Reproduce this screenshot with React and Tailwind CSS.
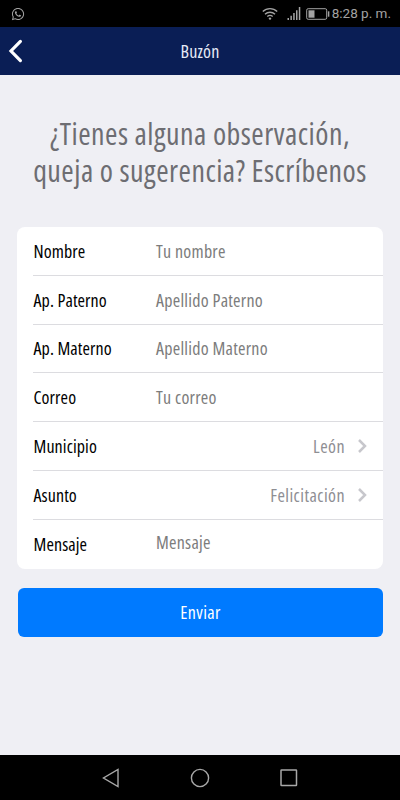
import { FaWhatsapp } from 'react-icons/fa'

const fields = [
  { label: 'Nombre', placeholder: 'Tu nombre' },
  { label: 'Ap. Paterno', placeholder: 'Apellido Paterno' },
  { label: 'Ap. Materno', placeholder: 'Apellido Materno' },
  { label: 'Correo', placeholder: 'Tu correo' },
  { label: 'Municipio', value: 'León' },
  { label: 'Asunto', value: 'Felicitación' },
  { label: 'Mensaje', placeholder: 'Mensaje', multiline: true },
]

function StatusBar() {
  return (
    <div className="flex h-[27px] items-center bg-black pl-[11px] pr-[9px] text-[#a3a3a3]">
      <FaWhatsapp size={14} />
      <svg className="ml-auto" width="16" height="13" viewBox="0 0 16 13" fill="none" stroke="currentColor" strokeWidth="1.4">
        <path d="M.8 4.6a10.3 10.3 0 0 1 14.4 0M3 7.2a7.2 7.2 0 0 1 10 0M5.3 9.6a4 4 0 0 1 5.4 0" />
        <circle cx="8" cy="11.6" r="1.2" fill="currentColor" stroke="none" />
      </svg>
      <svg className="ml-[9px]" width="14" height="13" viewBox="0 0 14 13" fill="currentColor">
        <path d="M.5 11h1.5v2H.5zM3.4 8.8h1.5V13H3.4zM6.2 6h1.5v7H6.2zM9 3.2h1.5V13H9zM11.8 0h1.5v13h-1.5z" />
      </svg>
      <svg className="ml-[5px]" width="24" height="12" viewBox="0 0 24 12" fill="none" stroke="currentColor">
        <rect x=".7" y=".7" width="20" height="10.6" rx="1.5" />
        <path d="M2.5 2.3h6v7.4h-6z" fill="currentColor" stroke="none" />
        <path d="M22.6 3.3v5.4" strokeWidth="1.5" />
      </svg>
      <span className="ml-0.5 whitespace-nowrap pt-px font-['Roboto'] text-[13.5px] leading-none font-stretch-normal">
        8:28 p. m.
      </span>
    </div>
  )
}

function FieldRow({ field, last }) {
  return (
    <li className="ml-4 flex">
      <div
        className={
          last
            ? 'flex h-[49px] flex-1 items-center text-lg'
            : 'flex h-[48.8px] flex-1 items-center border-b border-[#dcdce0] text-lg'
        }
      >
        <span className="w-[123px] pl-[.5px] tracking-[.1px] text-black">{field.label}</span>
        {field.value ? (
          <span className="ml-auto mr-4 flex items-center gap-[13px] tracking-[.45px] text-[#8e8e93]">
            {field.value}
            <svg width="9" height="14" viewBox="0 0 9 14" fill="none" stroke="#c7c7cc" strokeWidth="2.5">
              <path d="m1 1 6 6-6 6" />
            </svg>
          </span>
        ) : (
          <span
            className={
              field.multiline
                ? 'pb-1 tracking-[.25px] text-[#7c7c7c]'
                : 'tracking-[.25px] text-[#7c7c7c]'
            }
          >
            {field.placeholder}
          </span>
        )}
      </div>
    </li>
  )
}

function App() {
  return (
    <div className="flex h-[800px] w-[400px] flex-col bg-[#efeff4] font-['Open_Sans',sans-serif] font-stretch-condensed">
      <StatusBar />

      <header className="flex h-12 items-center bg-[#0a1e55] px-2 text-[#e6ebf7]">
        <svg className="text-white" width="15" height="24" viewBox="0 0 15 24" fill="none" stroke="currentColor" strokeWidth="3.2" strokeLinecap="round">
          <path d="M12.4 2.4 3 12l9.4 9.6" />
        </svg>
        <h1 className="flex-1 pr-[15px] text-center text-lg tracking-[.2px]">Buzón</h1>
      </header>

      <main className="flex-1">
        <h2 className="mt-[40px] text-center text-[30px] leading-[37px] tracking-[.48px] text-[#6d6d72]">
          ¿Tienes alguna observación,
          <br />
          queja o sugerencia? Escríbenos
        </h2>

        <ul className="mx-[17px] mt-[38px] overflow-hidden rounded-lg bg-white">
          {fields.map((field, i) => (
            <FieldRow key={field.label} field={field} last={i === fields.length - 1} />
          ))}
        </ul>

        <div className="pl-[18px] pr-[17px]">
          <button type="button" className="mt-[19px] h-[49px] w-full rounded-md bg-[#007aff] text-lg tracking-[.4px] text-white">
            Enviar
          </button>
        </div>
      </main>

      <nav className="flex h-[45px] items-center justify-between bg-black px-[102px] text-[#a8a8a8]">
        <svg width="18" height="20" viewBox="0 0 18 20" fill="none" stroke="currentColor" strokeWidth="1.4">
          <path d="M16 1.5v17L1.5 10z" />
        </svg>
        <svg width="20" height="20" viewBox="0 0 20 20" fill="none" stroke="currentColor" strokeWidth="1.4">
          <circle cx="10" cy="10" r="8.6" />
        </svg>
        <svg width="18" height="18" viewBox="0 0 18 18" fill="none" stroke="currentColor" strokeWidth="1.5">
          <rect x="1" y="1" width="15.5" height="15.5" rx=".5" />
        </svg>
      </nav>
    </div>
  )
}

export default App
